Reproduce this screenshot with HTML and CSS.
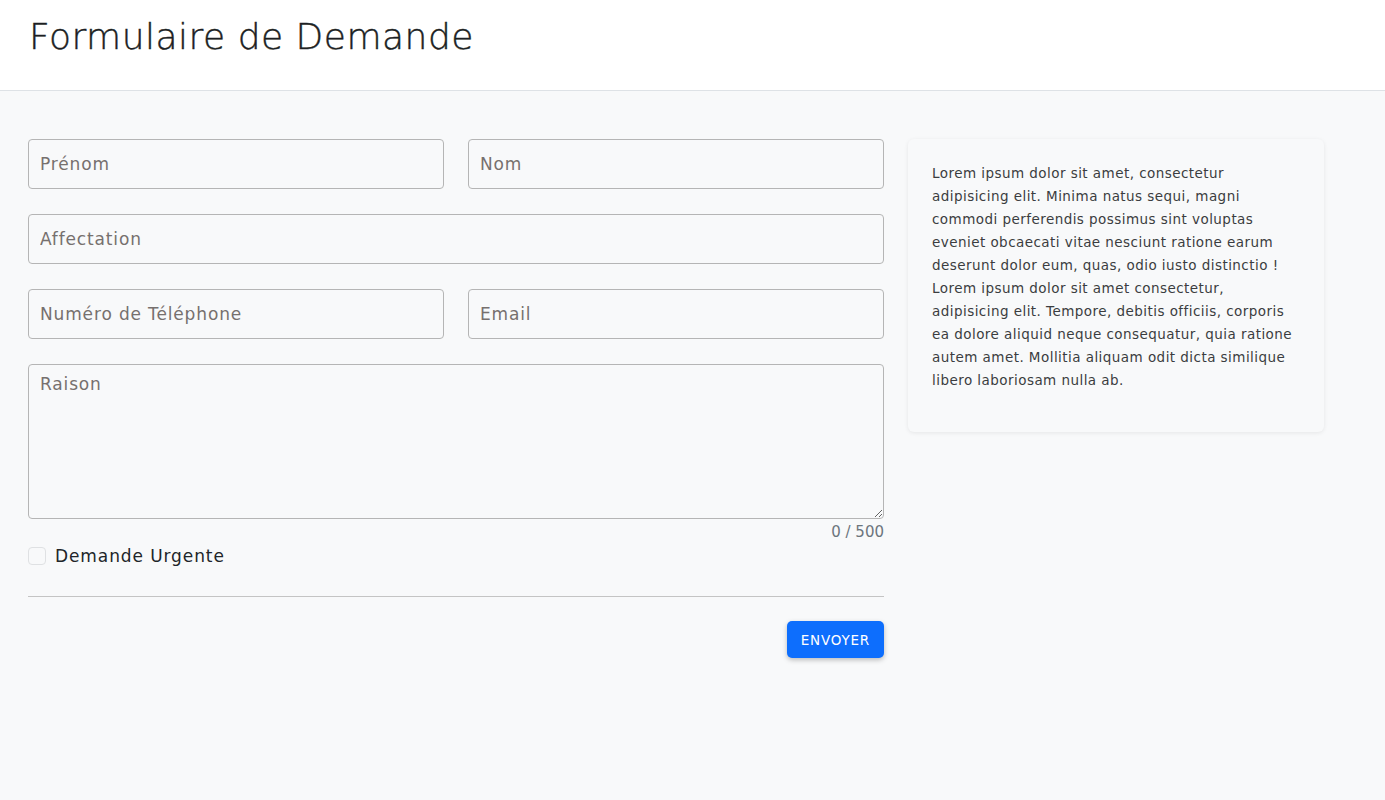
FILE: index.html
```html
<!DOCTYPE html>
<html lang="fr">
<head>
<meta charset="utf-8">
<title>Formulaire de Demande</title>
<link rel="stylesheet" href="styles.css">
</head>
<body>
<header class="topbar">
  <h1 class="title">Formulaire de Demande</h1>
</header>
<main class="page">
  <form class="form">
    <div class="row">
      <input class="field" type="text" placeholder="Prénom">
      <input class="field" type="text" placeholder="Nom">
    </div>
    <div class="row">
      <input class="field" type="text" placeholder="Affectation">
    </div>
    <div class="row">
      <input class="field" type="text" placeholder="Numéro de Téléphone">
      <input class="field" type="text" placeholder="Email">
    </div>
    <div class="area-wrap">
      <textarea class="area" placeholder="Raison"></textarea>
      <div class="counter">0 / 500</div>
    </div>
    <label class="check">
      <span class="box"></span>
      <span class="check-label">Demande Urgente</span>
    </label>
    <hr class="sep">
    <div class="actions">
      <button type="button" class="btn">ENVOYER</button>
    </div>
  </form>
  <aside class="card">
    <p>Lorem ipsum dolor sit amet, consectetur adipisicing elit. Minima natus sequi, magni commodi perferendis possimus sint voluptas eveniet obcaecati vitae nesciunt ratione earum deserunt dolor eum, quas, odio iusto distinctio ! Lorem ipsum dolor sit amet consectetur, adipisicing elit. Tempore, debitis officiis, corporis ea dolore aliquid neque consequatur, quia ratione autem amet. Mollitia aliquam odit dicta similique libero laboriosam nulla ab.</p>
  </aside>
</main>
</body>
</html>
```

FILE: styles.css
```css
* { box-sizing: border-box; }
html, body { margin: 0; padding: 0; }
body {
  font-family: "DejaVu Sans", "Open Sans", sans-serif;
  background: #f8f9fa;
  color: #212529;
  min-height: 800px;
}
.topbar {
  background: #ffffff;
  height: 91px;
  border-bottom: 1px solid #dee2e6;
  padding: 0 29px;
  display: flex;
  align-items: center;
}
.title {
  margin: 0;
  font-weight: 300;
  font-size: 36px;
  color: #1c1f23;
  letter-spacing: 0.5px;
  position: relative;
  top: -9px;
  -webkit-text-stroke: 0.4px #1c1f23;
}
.page {
  display: flex;
  gap: 24px;
  padding: 48px 28px 0 28px;
  align-items: flex-start;
}
.form {
  width: 856px;
  display: flex;
  flex-direction: column;
}
.row {
  display: flex;
  gap: 24px;
  margin-bottom: 25px;
}
.field, .area {
  height: 50px;
  border: 1px solid #b5b5b5;
  border-radius: 4px;
  background: #f8f9fa;
  padding: 0 11px;
  font-family: inherit;
  font-size: 17px;
  letter-spacing: 0.85px;
  font-weight: 400;
  color: #212529;
  outline: none;
}
.field {
  flex: 1;
  min-width: 0;
}
.field::placeholder, .area::placeholder {
  color: #76706e;
}
.area-wrap {
  display: flex;
  flex-direction: column;
}
.area {
  width: 100%;
  height: 155px;
  padding: 9px 11px;
  resize: vertical;
}
.counter {
  text-align: right;
  font-size: 15px;
  font-weight: 400;
  color: #6c757d;
  margin-top: 3px;
  line-height: 20px;
}
.check {
  display: flex;
  align-items: center;
  gap: 9px;
  margin-top: 2px;
  height: 24px;
}
.box {
  width: 18px;
  height: 18px;
  border: 1px solid #dfe1e3;
  border-radius: 4px;
  background: #f8f9fa;
}
.check-label {
  font-size: 17px;
  letter-spacing: 0.9px;
  font-weight: 400;
  color: #212529;
}
.sep {
  border: 0;
  border-top: 1px solid #c4c4c4;
  margin: 28px 0 24px 0;
  height: 0;
}
.actions {
  display: flex;
  justify-content: flex-end;
}
.btn {
  background: #0d6efd;
  color: #ffffff;
  border: 0;
  border-radius: 5px;
  height: 37px;
  padding: 0 14px;
  font-family: inherit;
  font-size: 13.5px;
  font-weight: 400;
  letter-spacing: 0.8px;
  box-shadow: 0 2px 5px rgba(0,0,0,0.25);
}
.card {
  width: 416px;
  background: #f8f9fa;
  border-radius: 6px;
  box-shadow: 0 1px 4px rgba(0,0,0,0.08);
  padding: 23px 24px 40px 24px;
}
.card p {
  margin: 0;
  font-size: 13.5px;
  letter-spacing: 0.45px;
  font-weight: 400;
  line-height: 23px;
  color: #3b3d40;
}
```
